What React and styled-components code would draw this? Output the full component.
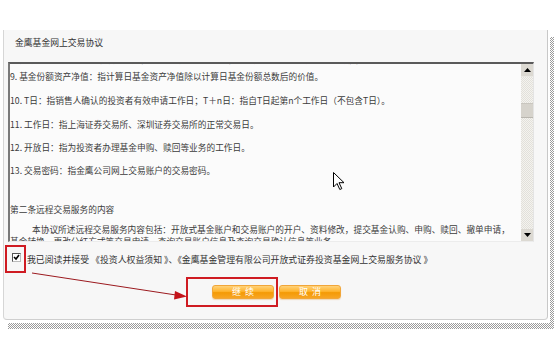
import React from "react";
import styled, { createGlobalStyle } from "styled-components";

const GlobalStyle = createGlobalStyle`
  html, body {
    margin: 0;
    padding: 0;
    background: #ffffff;
  }
  body {
    font-family: "Noto Sans CJK SC", "Liberation Sans", sans-serif;
    color: #444;
  }
`;

const Page = styled.div`
  position: relative;
  width: 554px;
  height: 354px;
  padding: 30px 0 0 3px;
  box-sizing: border-box;
  overflow: hidden;
`;

const Panel = styled.div`
  position: relative;
  width: 545px;
  height: 290px;
  box-sizing: border-box;
  background: #f7f7f7;
  border-left: 1px solid #d6d6d6;
  border-right: 1px solid #c8c8c8;
  border-bottom: 1px solid #cfcfcf;
  border-radius: 0 0 4px 4px;
  display: flex;
  flex-direction: column;
  /* dotted drop shadow, right and bottom */
  &::before {
    content: "";
    position: absolute;
    top: 7px;
    left: calc(100% + 3px);
    width: 5px;
    bottom: -10px;
    background: repeating-conic-gradient(#9a9a9a 0 25%, #ffffff 0 50%) 0 0 / 2px 2px;
  }
  &::after {
    content: "";
    position: absolute;
    left: 4px;
    right: -8px;
    top: calc(100% + 4px);
    height: 6px;
    background: repeating-conic-gradient(#9a9a9a 0 25%, #ffffff 0 50%) 0 0 / 2px 2px;
  }
`;

const Title = styled.div`
  padding: 7px 0 0 11px;
  font-size: 8.8px;
  line-height: 12px;
  color: #333;
`;

const TextBox = styled.div`
  margin: 13px 0 0 4px;
  width: 526px;
  height: 180px;
  box-sizing: border-box;
  background: #fbfbfb;
  border-top: 2px solid #5a5a5a;
  border-left: 2px solid #7a7a7a;
  border-right: 1px solid #e4e4e4;
  border-bottom: 1px solid #ececec;
  display: flex;
`;

const Content = styled.div`
  flex: 1;
  overflow: hidden;
  font-size: 8.7px;
  color: #3c3c3c;
`;

const Inner = styled.div`
  margin-top: -10px;
`;

const Line = styled.p`
  margin: ${(p) => p.$gap || 0}px 0 0 0;
  line-height: 12px;
  height: 12px;
  white-space: nowrap;
  text-indent: ${(p) => p.$indent || 0}px;
`;

const ScrollBar = styled.div`
  width: 12px;
  display: flex;
  flex-direction: column;
  background: repeating-conic-gradient(#e2e0da 0 25%, #f4f3ef 0 50%) 0 0 / 2px 2px;
`;

const ScrollButton = styled.div`
  height: 12px;
  background: #dcd9d2;
  display: flex;
  align-items: center;
  justify-content: center;
  border-bottom: ${(p) => (p.$up ? "1px solid #eae8e3" : "none")};
`;

const Thumb = styled.div`
  margin-top: ${(p) => p.$top}px;
  height: 13px;
  background: #d6d3cc;
  border-top: 1px solid #c9c6bf;
  border-bottom: 1px solid #b9b6af;
`;

const Track = styled.div`
  flex: 1;
`;

const AgreeRow = styled.div`
  margin: 3px 0 0 1px;
  display: flex;
  align-items: center;
`;

const RedBox = styled.div`
  border: 2px solid #cf1b22;
  box-sizing: border-box;
  width: ${(p) => p.$w}px;
  height: ${(p) => p.$h}px;
  padding: ${(p) => p.$pad};
  display: flex;
  align-items: flex-start;
`;

const CheckBox = styled.span`
  display: flex;
  width: 9px;
  height: 9px;
  box-sizing: border-box;
  background: #ffffff;
  border-top: 1px solid #555;
  border-left: 1px solid #555;
  border-right: 1px solid #bbb;
  border-bottom: 1px solid #bbb;
  align-items: center;
  justify-content: center;
`;

const AgreeText = styled.span`
  margin-left: 1px;
  font-size: 8.9px;
  color: #333;
  white-space: nowrap;
`;

const ButtonRow = styled.div`
  margin: 4px 0 0 182px;
  display: flex;
  align-items: flex-start;
`;

const OrangeButton = styled.div`
  width: 62px;
  height: 14px;
  box-sizing: border-box;
  border-radius: 3px;
  background: linear-gradient(#ffd27a 0%, #ffb42e 45%, #f59a05 55%, #f7a523 100%);
  border: 1px solid #f1a63a;
  box-shadow: 0 1px 1px rgba(230, 160, 60, 0.35);
  color: #ffffff;
  font-size: 9px;
  line-height: 12px;
  text-align: center;
  letter-spacing: 4px;
  padding-left: 4px;
  margin: ${(p) => p.$mt || 0}px 0 0 ${(p) => p.$ml || 0}px;
`;

const Overlay = styled.svg`
  position: absolute;
  left: 0;
  top: 0;
  width: 554px;
  height: 354px;
  pointer-events: none;
`;

const lines = [
  { text: "8. 开放式基金：指基金规模不固定，基金份额可以在基金合同约定的时间和场所申购或赎回的基金。", gap: 0 },
  { text: "9. 基金份额资产净值：指计算日基金资产净值除以计算日基金份额总数后的价值。", gap: 5 },
  { text: "10. T日：指销售人确认的投资者有效申请工作日；T＋n日：指自T日起第n个工作日（不包含T日）。", gap: 12 },
  { text: "11. 工作日：指上海证券交易所、深圳证券交易所的正常交易日。", gap: 12 },
  { text: "12. 开放日：指为投资者办理基金申购、赎回等业务的工作日。", gap: 11 },
  { text: "13. 交易密码：指金鹰公司网上交易账户的交易密码。", gap: 11 },
  { text: "第二条远程交易服务的内容", gap: 27 },
  {
    text: "本协议所述远程交易服务内容包括：开放式基金账户和交易账户的开户、资料修改，提交基金认购、申购、赎回、撤单申请，",
    gap: 8,
    indent: 22,
  },
  { text: "基金转换、更改分红方式等交易申请，查询交易账户信息及查询交易确认信息等业务。", gap: 0 },
];

export default function App() {
  return (
    <>
      <GlobalStyle />
      <Page>
        <Panel>
          <Title>金鹰基金网上交易协议</Title>
          <TextBox>
            <Content>
              <Inner>
                {lines.map((l, i) => (
                  <Line key={i} $gap={l.gap} $indent={l.indent}>
                    {l.text}
                  </Line>
                ))}
              </Inner>
            </Content>
            <ScrollBar>
              <ScrollButton $up>
                <svg width="7" height="4" viewBox="0 0 7 4">
                  <path d="M0 4 L3.5 0 L7 4 Z" fill="#000" />
                </svg>
              </ScrollButton>
              <Thumb $top={26} />
              <Track />
              <ScrollButton>
                <svg width="7" height="4" viewBox="0 0 7 4">
                  <path d="M0 0 L7 0 L3.5 4 Z" fill="#000" />
                </svg>
              </ScrollButton>
            </ScrollBar>
          </TextBox>
          <AgreeRow>
            <RedBox $w={21} $h={28} $pad="6px 0 0 5px">
              <CheckBox>
                <svg width="7" height="7" viewBox="0 0 7 7">
                  <path d="M1 3 L3 5 L6 1" stroke="#000" strokeWidth="1.6" fill="none" />
                </svg>
              </CheckBox>
            </RedBox>
            <AgreeText>
              我已阅读并接受 《投资人权益须知 》、《金鹰基金管理有限公司开放式证券投资基金网上交易服务协议 》
            </AgreeText>
          </AgreeRow>
          <ButtonRow>
            <RedBox $w={92} $h={30} $pad="6px 0 0 24px">
              <OrangeButton>继续</OrangeButton>
            </RedBox>
            <OrangeButton $ml={1} $mt={8}>
              取消
            </OrangeButton>
          </ButtonRow>
        </Panel>
        <Overlay viewBox="0 0 554 354">
          <line x1="32" y1="273" x2="176" y2="295" stroke="#9c1a1f" strokeWidth="1" />
          <path d="M187 296.5 L175 291 L174 299.5 Z" fill="#c4141b" />
          <path
            d="M333.5 172.5 L333.5 187 L337 183.5 L339.8 189.5 L341.8 188.6 L339 182.7 L344 182.7 Z"
            fill="#ffffff"
            stroke="#000"
            strokeWidth="1"
          />
        </Overlay>
      </Page>
    </>
  );
}
